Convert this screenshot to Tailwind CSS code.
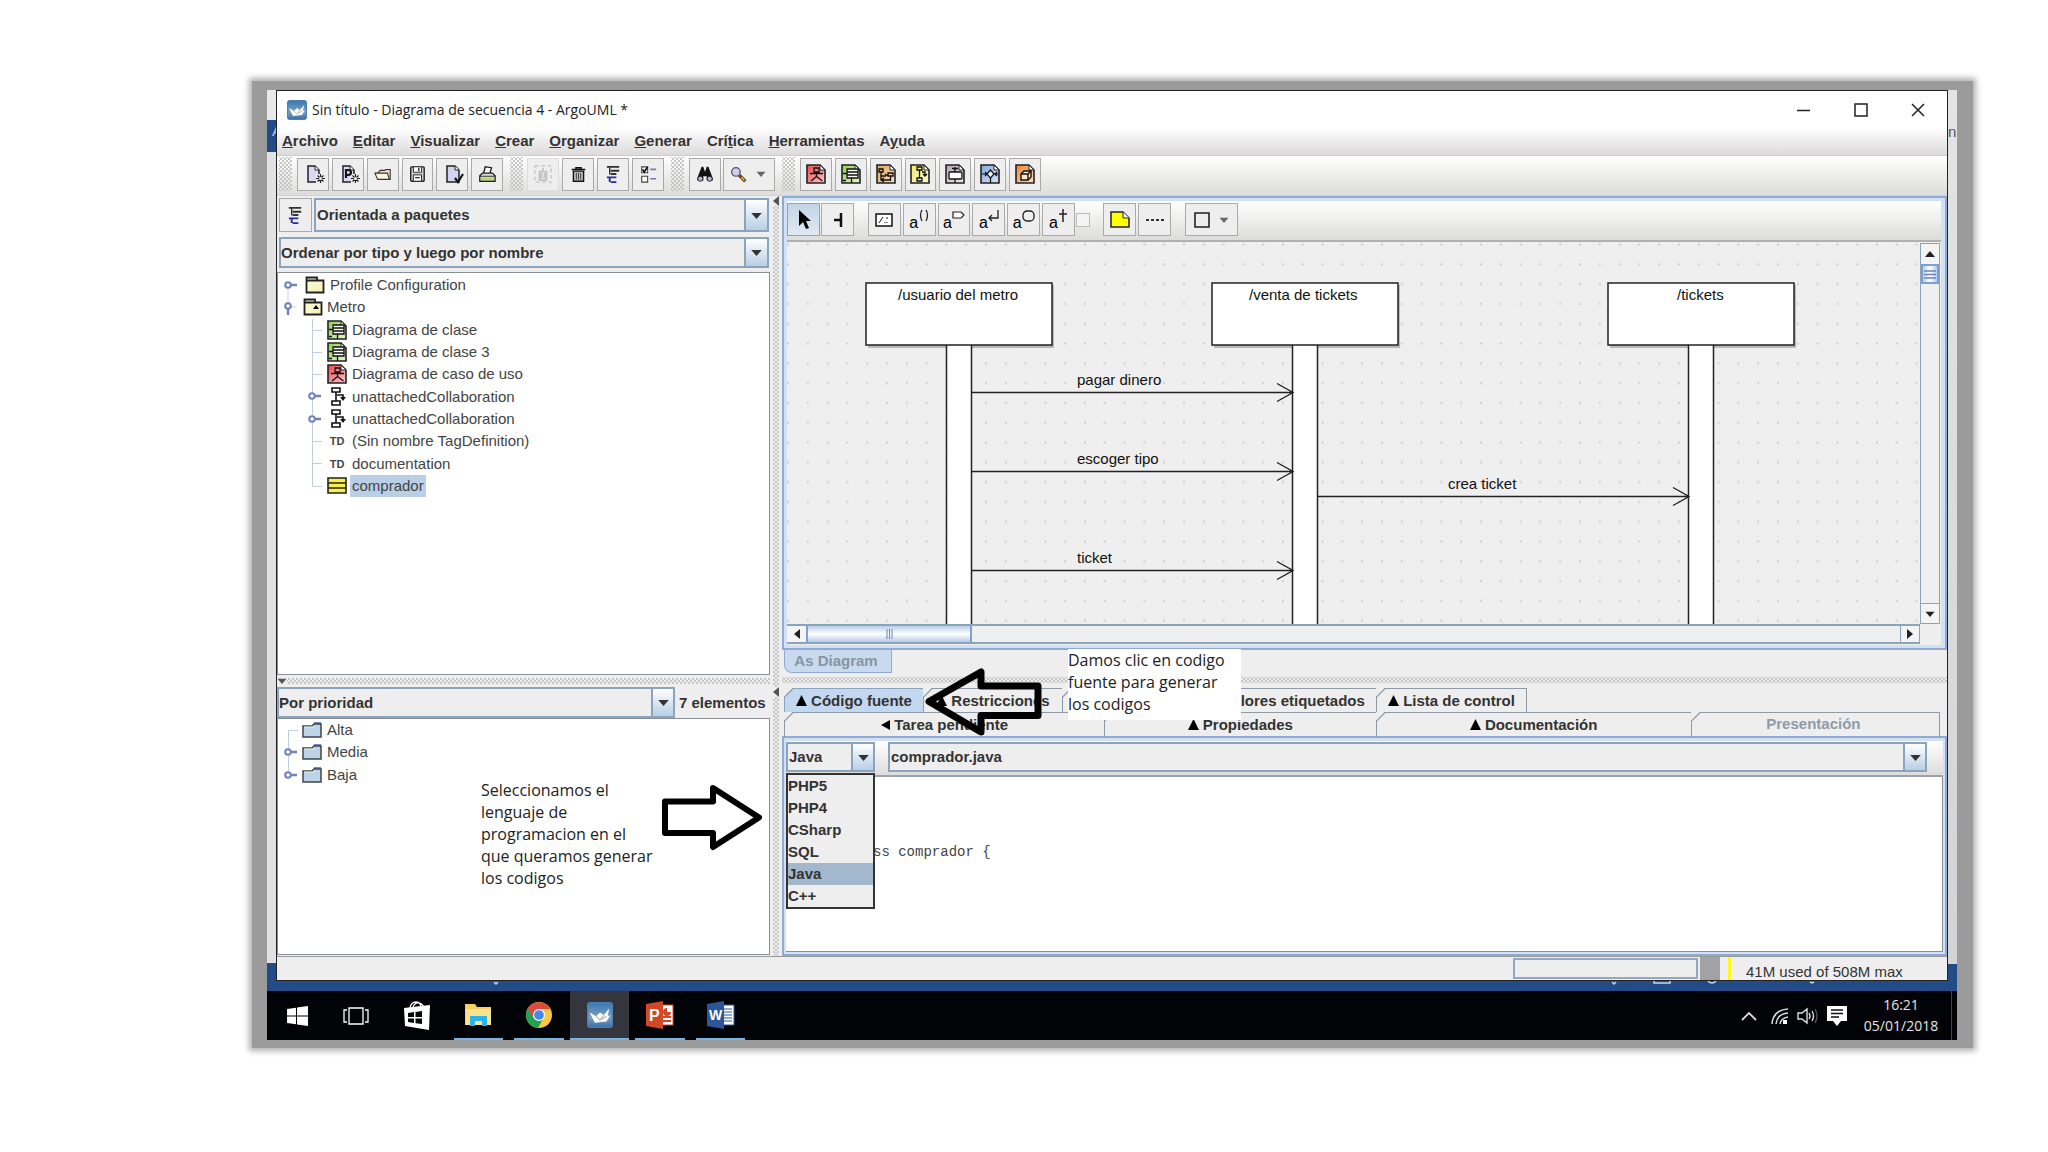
<!DOCTYPE html>
<html lang="es">
<head>
<meta charset="utf-8">
<title>Sin título - Diagrama de secuencia 4 - ArgoUML *</title>
<script src="https://cdn.jsdelivr.net/npm/@tailwindcss/browser@4"></script>
</head>
<body class="bg-white font-['Liberation_Sans',Arial,sans-serif] text-[15px] leading-[22px] text-[#333]">

<!-- Shared icons -->
<svg class="absolute h-0 w-0" xmlns="http://www.w3.org/2000/svg" aria-hidden="true">
  <defs>
    <linearGradient id="argoBg" x1="0" y1="0" x2="0" y2="1"><stop offset="0" stop-color="#3a76b4"/><stop offset=".6" stop-color="#7ba0c0"/><stop offset="1" stop-color="#3a6da8"/></linearGradient>
    <linearGradient id="folderY" x1="0" y1="0" x2="1" y2="1"><stop offset="0" stop-color="#fdfdd8"/><stop offset="1" stop-color="#f4f2b8"/></linearGradient>
    <linearGradient id="redG" x1="0" y1="0" x2="1" y2="1"><stop offset="0" stop-color="#f0464e"/><stop offset="1" stop-color="#fbc9c9"/></linearGradient>
    <linearGradient id="greenG" x1="0" y1="0" x2="1" y2="1"><stop offset="0" stop-color="#8ed04a"/><stop offset="1" stop-color="#e4f5d2"/></linearGradient>
    <linearGradient id="tanG" x1="0" y1="0" x2="1" y2="1"><stop offset="0" stop-color="#dfa45a"/><stop offset="1" stop-color="#f8e4c8"/></linearGradient>
    <linearGradient id="yelG" x1="0" y1="0" x2="1" y2="1"><stop offset="0" stop-color="#efe96a"/><stop offset="1" stop-color="#fdfbd6"/></linearGradient>
    <linearGradient id="greyG" x1="0" y1="0" x2="1" y2="1"><stop offset="0" stop-color="#b3a3ad"/><stop offset="1" stop-color="#f2eef1"/></linearGradient>
    <linearGradient id="blueG" x1="0" y1="0" x2="1" y2="1"><stop offset="0" stop-color="#7fa8dc"/><stop offset="1" stop-color="#d8e6f6"/></linearGradient>
    <linearGradient id="oraG" x1="0" y1="0" x2="1" y2="1"><stop offset="0" stop-color="#f0832a"/><stop offset="1" stop-color="#fde0c2"/></linearGradient>
    <pattern id="dots" width="19.8" height="19.8" patternUnits="userSpaceOnUse"><rect x="0" y="1.5" width="2" height="2" fill="#cfcdcf"/></pattern>
  </defs>
  <symbol id="argo" viewBox="0 0 20 20"><rect x=".5" y=".5" width="19" height="19" rx="2" fill="url(#argoBg)" stroke="#4c7fb2"/><path d="M2 8 7 11l3-3 3 2 4-5-1 6 2-1-3 5-9 1z" fill="#fff"/><path d="M7 11l3 3 3-4M10 14l5-3" stroke="#b9bfc2" fill="none"/></symbol>
  <symbol id="page" viewBox="0 0 20 20"><path d="M1 1h13l5 5v13H1z" stroke="#222" stroke-width="1.6"/><path d="M14 1v5h5z" fill="#fff" stroke="#222"/></symbol>
  <symbol id="usecase" viewBox="0 0 20 20"><use href="#page" fill="url(#redG)"/><g fill="none" stroke="#111" stroke-width="1.3"><path d="M8 4h5v4H8zM10.5 8v5M4 9.500h13M10.500 12.500 5 17M10.500 12.500l6 4.500"/></g></symbol>
  <symbol id="classd" viewBox="0 0 20 20"><use href="#page" fill="url(#greenG)"/><path d="M6 5h11v9H6z" fill="#fff"/><path d="M6 5h11v9H6zM6 8h11M6 11h11M2 9.500h4M10.500 14v5M2 16.500h3" fill="none" stroke="#111" stroke-width="1.3"/></symbol>
  <symbol id="seqd" viewBox="0 0 20 20"><use href="#page" fill="url(#tanG)"/><g fill="none" stroke="#111" stroke-width="1.3"><path d="M3 5h4v3H3zM5 8v8M12 9h5v3h-5zM14.500 12v5M5 12h5M5 16h9M8 14l-3 2 3 2M9 10l3 2"/></g></symbol>
  <symbol id="colld" viewBox="0 0 20 20"><use href="#page" fill="url(#yelG)"/><g fill="none" stroke="#111" stroke-width="1.3"><path d="M7 3h5v3H7zM9.500 6v8M7 14h5v3H7zM12 8h3v4M13 10l2 2 2-2"/></g></symbol>
  <symbol id="stated" viewBox="0 0 20 20"><use href="#page" fill="url(#greyG)"/><g fill="none" stroke="#111" stroke-width="1.3"><rect x="4" y="8" width="13" height="7" rx="1" fill="#fff"/><path d="M10 3v5M7 4.500h6M10 15v4"/></g></symbol>
  <symbol id="actd" viewBox="0 0 20 20"><use href="#page" fill="url(#blueG)"/><path d="M10.500 6l3.500 4-3.500 4L7 10z" fill="#fff" stroke="#111" stroke-width="1.2"/><path d="M2 10h5M14 10h4M10.500 14v5M5 8l2 2-2 2M17 8l-2 2 2 2" fill="none" stroke="#111" stroke-width="1.2"/></symbol>
  <symbol id="depd" viewBox="0 0 20 20"><use href="#page" fill="url(#oraG)"/><g fill="#fbe6cf" stroke="#111" stroke-width="1.4"><path d="M6 10l3-3h7v6l-3 3H6z"/><path d="M6 10h7v6M13 10l3-3" fill="none"/></g></symbol>
  <symbol id="tree" viewBox="0 0 20 20"><g fill="none" stroke-width="2"><path d="M3 2h13M7 6h9M7 9.500h6" stroke="#333"/><path d="M6 2v8" stroke="#333" stroke-width="1.500"/><path d="M3 13h10M7 18h6M6 13v5" stroke="#2b2b9c"/></g></symbol>
  <symbol id="new" viewBox="0 0 20 20"><path d="M3 2h7l4 4v12H3z" fill="#dcd8f4" stroke="#222" stroke-width="1.500"/><path d="M10 2v4h4" fill="#fff" stroke="#222"/><path d="M11 10h9v9h-9z" fill="#eee"/><path d="M15.500 10v9M11 14.500h9M12.500 11.500l6 6M18.500 11.500l-6 6" stroke="#222" stroke-width="1.200"/><circle cx="15.500" cy="14.500" r="1.500" fill="#fff"/></symbol>
  <symbol id="newp" viewBox="0 0 20 20"><use href="#new"/><path d="M6 14V6h2q3 0 3 2.500t-3 2.500H6" fill="none" stroke="#111" stroke-width="2.200"/></symbol>
  <symbol id="open" viewBox="0 0 20 20"><path d="M4 9 7 6h5l1-1h5v11H5z" fill="#f6dcc8" stroke="#333" stroke-width="1.200"/><path d="M1 9h14l2 7H4z" fill="#fbf3e2" stroke="#333" stroke-width="1.200"/></symbol>
  <symbol id="save" viewBox="0 0 20 20"><rect x="3" y="2" width="15" height="16" rx="1" fill="#c9c9cc" stroke="#222" stroke-width="1.500"/><path d="M6 2h9v6H6zM6 11h9v7H6z" fill="#fff" stroke="#222"/><path d="M12 3v4M8 14h5" stroke="#222" stroke-width="1.500"/></symbol>
  <symbol id="props" viewBox="0 0 20 20"><path d="M3 2h8l4 4v12H3z" fill="#d5d3f2" stroke="#222" stroke-width="1.500"/><path d="M11 2v4h4" fill="#fff" stroke="#222"/><path d="M11 14l3 4 5-8" fill="none" stroke="#111" stroke-width="2.200"/></symbol>
  <symbol id="print" viewBox="0 0 20 20"><path d="M6 10 8 2l7 1-2 7z" fill="#fff" stroke="#222" stroke-width="1.500"/><path d="M2 12l3-3h11l3 3v6H2z" fill="#ddd" stroke="#222" stroke-width="1.500"/><path d="M3 14h15v3H3z" fill="#b9d86a"/><path d="M2 12.500h17" stroke="#222"/></symbol>
  <symbol id="ghost" viewBox="0 0 20 20"><rect x="1" y="1" width="18" height="18" fill="none" stroke="#c4c4c4" stroke-width="1.500" stroke-dasharray="4 3"/><path d="M10 3v4M6 7h8v10H6zM8 9v6M12 9v6" fill="#ddd" stroke="#bdbdbd" stroke-width="1.500"/></symbol>
  <symbol id="trash" viewBox="0 0 20 20"><path d="M2 4h16M7 4V2h6v2" fill="none" stroke="#111" stroke-width="1.800"/><path d="M4 6h12v12H4z" fill="#bbb" stroke="#111" stroke-width="1.600"/><path d="M7.500 8v8M10 8v8M12.500 8v8" stroke="#333"/></symbol>
  <symbol id="checks" viewBox="0 0 20 20"><g fill="#fff" stroke="#444" stroke-width="1.300"><path d="M2 1h7v7H2zM2 12h7v7H2z"/></g><path d="M3 4l2 3 4-6" fill="none" stroke="#111" stroke-width="2"/><path d="M12 4h7M12 15h7" stroke="#7a78b8" stroke-width="2"/></symbol>
  <symbol id="bino" viewBox="0 0 20 20"><path d="M6 1h2l2 6 2-6h2l5 13v3h-7v-5H8v5H1v-3z" fill="#111"/><circle cx="4.500" cy="15" r="3" fill="#b4b4de" stroke="#111"/><circle cx="15.500" cy="15" r="3" fill="#b4b4de" stroke="#111"/></symbol>
  <symbol id="lens" viewBox="0 0 20 20"><path d="M11 11l7 7" stroke="#5b3b12" stroke-width="4"/><path d="M13 13l4 4" stroke="#e2a63a" stroke-width="2"/><circle cx="7" cy="7" r="5" fill="#cfcdf0" stroke="#555" stroke-width="1.500"/></symbol>
  <symbol id="down" viewBox="0 0 12 8"><path d="M0 1h12L6 8z"/></symbol>
  <symbol id="tri" viewBox="0 0 12 12"><path d="M6 0l6 12H0z"/></symbol>
  <symbol id="knob" viewBox="0 0 14 10"><path d="M6 5h7" stroke="#6f83b9" stroke-width="2.500"/><circle cx="4" cy="5" r="2.800" fill="#fff" stroke="#6f83b9" stroke-width="2"/></symbol>
  <symbol id="collab" viewBox="0 0 20 20"><g fill="#fff" stroke="#111" stroke-width="1.600"><path d="M5 1h8v4H5zM9 5v9M5 14h8v4H5z"/><path d="M10 8h6v4" fill="none"/><path d="M13 10h6l-3 4z" fill="#111" stroke="none"/></g></symbol>
  <symbol id="folderB" viewBox="0 0 20 16"><path d="M11 3l1-3h7v3z" fill="#7189c0"/><path d="M1 4h9l2-2h7v13H1z" fill="#bcd3e8" stroke="#444" stroke-width="1.500"/><path d="M2 5h9l2-1.500" fill="none" stroke="#e8f2fb"/></symbol>
  <symbol id="corner" viewBox="0 0 10 10"><path d="M-1-1h11l-11 11z" fill="#eee"/><path d="M0 9.500 9.500 0" stroke="#8e9aa6" stroke-width="1.200"/></symbol>
</svg>

<div class="pt-[81px] pl-[252px] pr-[75px] pb-[60px]">
<div class="bg-[#9b9b9b] pt-[9px] pb-2 pl-[15px] pr-4 shadow-[0_0_6px_3px_#b0b0b0]">
<div class="bg-[#234b88]">

  <div class="flex">
    <!-- Left edge of the window behind -->
    <div class="flex w-[9px] flex-col overflow-hidden">
      <div class="h-[30px] bg-[#e9e9e9]"></div>
      <div class="h-8 bg-[#234b88] pl-[5px] text-white/70">A</div>
      <div class="flex-1 bg-[#e2e2e4]"></div>
      <div class="h-[18px]"></div>
    </div>

    <!-- ArgoUML window -->
    <main class="min-w-0 flex-1 border border-[#222] bg-[#eee]">
      <header class="flex h-[37px] items-center bg-white pl-[10px] pr-[22px] text-black">
        <svg class="h-5 w-5"><use href="#argo"/></svg>
        <h1 class="ml-[5px] flex-1 font-['Open_Sans',sans-serif] text-[14px] text-[#222]">Sin título - Diagrama de secuencia 4 - ArgoUML *</h1>
        <div class="flex gap-[43px]">
          <button aria-label="Minimizar"><svg class="h-[14px] w-[14px]"><path d="M0 7.500h13" stroke="#222" stroke-width="1.500"/></svg></button>
          <button aria-label="Maximizar"><svg class="h-[14px] w-[14px]"><rect x="1" y="1" width="12" height="12" fill="none" stroke="#222" stroke-width="1.500"/></svg></button>
          <button aria-label="Cerrar"><svg class="h-[14px] w-[14px]"><path d="M1 1l12 12M13 1 1 13" stroke="#222" stroke-width="1.500"/></svg></button>
        </div>
      </header>

      <nav class="flex h-7 items-center gap-[15px] border-b border-[#ccc] bg-linear-to-b from-white to-[#dcdada] pb-[2px] pl-[5px] font-bold">
        <button><u>A</u>rchivo</button><button><u>E</u>ditar</button><button><u>V</u>isualizar</button><button><u>C</u>rear</button><button><u>O</u>rganizar</button><button><u>G</u>enerar</button><button>Crí<u>t</u>ica</button><button><u>H</u>erramientas</button><button>A<u>y</u>uda</button>
      </nav>

      <div class="flex h-10 items-center border-b border-[#d2d2d2] bg-linear-to-b from-white to-[#dcdcda] pb-[3px] pl-[2px]">
        <div class="mr-[5px] h-[34px] w-[13px] bg-[radial-gradient(#c6c6c6_1px,transparent_1px),radial-gradient(#c6c6c6_1px,transparent_1px)] [background-position:0_0,2px_2px] [background-size:4px_4px]"></div>
        <div class="grid h-[33px] w-[206px] grid-cols-6 gap-[3px]">
          <button aria-label="Nuevo" class="grid place-items-center border border-[#aaa] bg-[#eee] pl-1"><svg class="h-5 w-5"><use href="#new"/></svg></button>
          <button aria-label="Nuevo perfil" class="grid place-items-center border border-[#aaa] bg-[#eee] pl-1"><svg class="h-5 w-5"><use href="#newp"/></svg></button>
          <button aria-label="Abrir" class="grid place-items-center border border-[#aaa] bg-[#eee]"><svg class="h-[18px] w-[18px]"><use href="#open"/></svg></button>
          <button aria-label="Guardar" class="grid place-items-center border border-[#aaa] bg-[#eee]"><svg class="h-[18px] w-[18px]"><use href="#save"/></svg></button>
          <button aria-label="Propiedades" class="grid place-items-center border border-[#aaa] bg-[#eee] pl-1"><svg class="h-5 w-5"><use href="#props"/></svg></button>
          <button aria-label="Imprimir" class="grid place-items-center border border-[#aaa] bg-[#eee]"><svg class="h-[18px] w-[18px]"><use href="#print"/></svg></button>
        </div>
        <div class="mr-1 ml-[7px] h-[34px] w-[13px] bg-[radial-gradient(#c6c6c6_1px,transparent_1px),radial-gradient(#c6c6c6_1px,transparent_1px)] [background-position:0_0,2px_2px] [background-size:4px_4px]"></div>
        <div class="grid h-[33px] w-[137px] grid-cols-4 gap-[3px]">
          <button disabled aria-label="Quitar" class="grid place-items-center border border-[#ddd] bg-[#eee]"><svg class="h-[18px] w-[18px]"><use href="#ghost"/></svg></button>
          <button aria-label="Eliminar" class="grid place-items-center border border-[#aaa] bg-[#eee]"><svg class="h-[17px] w-[17px]"><use href="#trash"/></svg></button>
          <button aria-label="Perspectivas" class="grid place-items-center border border-[#aaa] bg-[#eee]"><svg class="h-[19px] w-[19px]"><use href="#tree"/></svg></button>
          <button aria-label="Opciones" class="grid place-items-center border border-[#aaa] bg-[#eee]"><svg class="h-[17px] w-[17px]"><use href="#checks"/></svg></button>
        </div>
        <div class="mr-[5px] ml-[7px] h-[34px] w-[13px] bg-[radial-gradient(#c6c6c6_1px,transparent_1px),radial-gradient(#c6c6c6_1px,transparent_1px)] [background-position:0_0,2px_2px] [background-size:4px_4px]"></div>
        <div class="flex h-[33px] gap-[2px]">
          <button aria-label="Buscar" class="grid w-8 place-items-center border border-[#aaa] bg-[#eee]"><svg class="h-[17px] w-[18px]"><use href="#bino"/></svg></button>
          <button aria-label="Zoom" class="flex w-[52px] items-center justify-between border border-[#aaa] bg-[#eee] pr-[8px] pl-[6px]"><svg class="h-[17px] w-[17px]"><use href="#lens"/></svg><svg class="h-[6px] w-[10px] fill-[#666]"><use href="#down"/></svg></button>
        </div>
        <div class="mr-[5px] ml-[7px] h-[34px] w-[13px] bg-[radial-gradient(#c6c6c6_1px,transparent_1px),radial-gradient(#c6c6c6_1px,transparent_1px)] [background-position:0_0,2px_2px] [background-size:4px_4px]"></div>
        <div class="grid h-[33px] w-[241px] grid-cols-7 gap-[3px]">
          <button aria-label="Diagrama de caso de uso" class="grid place-items-center border border-[#aaa] bg-[#eee]"><svg class="h-5 w-5"><use href="#usecase"/></svg></button>
          <button aria-label="Diagrama de clase" class="grid place-items-center border border-[#aaa] bg-[#eee]"><svg class="h-5 w-5"><use href="#classd"/></svg></button>
          <button aria-label="Diagrama de secuencia" class="grid place-items-center border border-[#aaa] bg-[#eee]"><svg class="h-5 w-5"><use href="#seqd"/></svg></button>
          <button aria-label="Diagrama de colaboración" class="grid place-items-center border border-[#aaa] bg-[#eee]"><svg class="h-5 w-5"><use href="#colld"/></svg></button>
          <button aria-label="Diagrama de estados" class="grid place-items-center border border-[#aaa] bg-[#eee]"><svg class="h-5 w-5"><use href="#stated"/></svg></button>
          <button aria-label="Diagrama de actividades" class="grid place-items-center border border-[#aaa] bg-[#eee]"><svg class="h-5 w-5"><use href="#actd"/></svg></button>
          <button aria-label="Diagrama de despliegue" class="grid place-items-center border border-[#aaa] bg-[#eee]"><svg class="h-5 w-5"><use href="#depd"/></svg></button>
        </div>
      </div>

      <div class="flex">
        <!-- Explorer and to-do column -->
        <section class="flex w-[493px] shrink-0 flex-col pt-[2px]">
          <div class="flex h-[34px] gap-[2px] px-[2px] pr-[1px]">
            <button aria-label="Configurar perspectivas" class="grid w-[33px] place-items-center border border-[#aaa] bg-[#eee]"><svg class="h-[19px] w-[19px]"><use href="#tree"/></svg></button>
            <div class="relative flex-1 border-2 border-[#8ba4bd]">
              <select aria-label="Perspectiva" class="h-full w-full appearance-none bg-[#eee] pl-[1px] font-bold"><option>Orientada a paquetes</option></select>
              <span class="pointer-events-none absolute inset-y-0 right-0 grid w-[23px] place-items-center border-l-2 border-[#8ba4bd] bg-linear-to-b from-white to-[#b8cfe5]"><svg class="h-[7px] w-[13px] fill-[#333]"><use href="#down"/></svg></span>
            </div>
          </div>
          <div class="mt-[5px] h-[31px] pr-[1px] pl-[2px]">
            <div class="relative h-full border-2 border-[#8ba4bd]">
              <select aria-label="Orden" class="h-full w-full appearance-none bg-[#eee] font-bold"><option>Ordenar por tipo y luego por nombre</option></select>
              <span class="pointer-events-none absolute inset-y-0 right-0 grid w-[23px] place-items-center border-l-2 border-[#8ba4bd] bg-linear-to-b from-white to-[#b8cfe5]"><svg class="h-[7px] w-[13px] fill-[#333]"><use href="#down"/></svg></span>
            </div>
          </div>

          <div class="mt-1 h-[403px] border border-[#8a8f96] bg-white pt-[1px] text-[#444]">
            <ul class="grid h-[223px] grid-rows-10">
              <li class="flex items-center pl-[6px]"><svg class="h-full w-[14px] shrink-0"><path d="M4 11v14" stroke="#c5d3e3"/><use href="#knob" y="6" width="14" height="10"/></svg><svg class="ml-[7px] h-[18px] w-5"><path d="M1.500 5V1.500H12V5M1.500 4.500h17v12h-17z" fill="url(#folderY)" stroke="#222" stroke-width="1.800"/></svg><span class="ml-[5px]">Profile Configuration</span></li>
              <li class="flex items-center pl-[6px]"><svg class="h-full w-[14px] shrink-0"><path d="M4 0v8M4 11h9" stroke="#c5d3e3"/><path d="M4 11v8" stroke="#6f83b9" stroke-width="2.500"/><circle cx="4" cy="10" r="2.800" fill="#fff" stroke="#6f83b9" stroke-width="2"/></svg><svg class="ml-[5px] h-[18px] w-5"><path d="M1.500 5V1.500H12V5M1.500 4.500h17v12h-17z" fill="url(#folderY)" stroke="#222" stroke-width="1.800"/><path d="M13 7l3 4h-6z"/></svg><span class="ml-[4px]">Metro</span></li>
              <li class="flex items-center pl-[30px]"><svg class="h-full w-[14px] shrink-0"><path d="M4.500 0v23M4 11.500h10" stroke="#c0cfdf"/></svg><svg class="ml-[5px] h-5 w-5"><use href="#classd"/></svg><span class="ml-[5px]">Diagrama de clase</span></li>
              <li class="flex items-center pl-[30px]"><svg class="h-full w-[14px] shrink-0"><path d="M4.500 0v23M4 11.500h10" stroke="#c0cfdf"/></svg><svg class="ml-[5px] h-5 w-5"><use href="#classd"/></svg><span class="ml-[5px]">Diagrama de clase 3</span></li>
              <li class="flex items-center pl-[30px]"><svg class="h-full w-[14px] shrink-0"><path d="M4.500 0v23M4 11.500h10" stroke="#c0cfdf"/></svg><svg class="ml-[5px] h-5 w-5"><use href="#usecase"/></svg><span class="ml-[5px]">Diagrama de caso de uso</span></li>
              <li class="flex items-center pl-[30px]"><svg class="h-full w-[14px] shrink-0"><path d="M4.500 0v23" stroke="#c0cfdf"/><use href="#knob" y="6" width="14" height="10"/></svg><svg class="ml-[5px] h-5 w-5"><use href="#collab"/></svg><span class="ml-[5px]">unattachedCollaboration</span></li>
              <li class="flex items-center pl-[30px]"><svg class="h-full w-[14px] shrink-0"><path d="M4.500 0v23" stroke="#c0cfdf"/><use href="#knob" y="6" width="14" height="10"/></svg><svg class="ml-[5px] h-5 w-5"><use href="#collab"/></svg><span class="ml-[5px]">unattachedCollaboration</span></li>
              <li class="flex items-center pl-[30px]"><svg class="h-full w-[14px] shrink-0"><path d="M4.500 0v23M4 11.500h10" stroke="#c0cfdf"/></svg><b class="ml-[5px] w-5 text-center text-[11px]">TD</b><span class="ml-[5px]">(Sin nombre TagDefinition)</span></li>
              <li class="flex items-center pl-[30px]"><svg class="h-full w-[14px] shrink-0"><path d="M4.500 0v23M4 11.500h10" stroke="#c0cfdf"/></svg><b class="ml-[5px] w-5 text-center text-[11px]">TD</b><span class="ml-[5px]">documentation</span></li>
              <li class="flex items-center pl-[30px]"><svg class="h-full w-[14px] shrink-0"><path d="M4.500 0v11.500h10" fill="none" stroke="#c0cfdf"/></svg><svg class="ml-[5px] h-[18px] w-5"><path d="M1 1h18v15H1zM1 6h18M1 11h18" fill="#f7f04a" stroke="#222" stroke-width="1.600"/></svg><span class="ml-[3px] bg-[#b8cfe5] px-[2px]">comprador</span></li>
            </ul>
          </div>

          <div class="flex h-3 items-start bg-[radial-gradient(#c6c6c6_1px,transparent_1px),radial-gradient(#c6c6c6_1px,transparent_1px)] bg-clip-content py-[3px] [background-position:0_0,2px_2px] [background-size:4px_4px]"><svg class="h-[6px] w-[10px] bg-[#eee] fill-[#555]"><use href="#down"/></svg></div>

          <div class="flex h-[31px] items-center">
            <div class="relative h-full flex-1 border-2 border-[#8ba4bd]">
              <select aria-label="Agrupar tareas" class="h-full w-full appearance-none bg-[#eee] font-bold"><option>Por prioridad</option></select>
              <span class="pointer-events-none absolute inset-y-0 right-0 grid w-[22px] place-items-center border-l-2 border-[#8ba4bd] bg-linear-to-b from-white to-[#b8cfe5]"><svg class="h-[7px] w-[13px] fill-[#333]"><use href="#down"/></svg></span>
            </div>
            <span class="w-[95px] pl-[4px] font-bold whitespace-nowrap">7 elementos</span>
          </div>

          <div class="relative h-[237px] border border-[#8a8f96] bg-white text-[#444]">
            <ul class="grid h-[67px] grid-rows-3">
              <li class="flex items-center pl-[6px]"><svg class="h-full w-[14px] shrink-0"><path d="M4.500 23V11.500h10" fill="none" stroke="#c0cfdf"/></svg><svg class="ml-[4px] h-4 w-5"><use href="#folderB"/></svg><span class="ml-[5px]">Alta</span></li>
              <li class="flex items-center pl-[6px]"><svg class="h-full w-[14px] shrink-0"><path d="M4.500 0v23" stroke="#c0cfdf"/><use href="#knob" y="6" width="14" height="10"/></svg><svg class="ml-[4px] h-4 w-5"><use href="#folderB"/></svg><span class="ml-[5px]">Media</span></li>
              <li class="flex items-center pl-[6px]"><svg class="h-full w-[14px] shrink-0"><path d="M4.500 0v11" stroke="#c0cfdf"/><use href="#knob" y="6" width="14" height="10"/></svg><svg class="ml-[4px] h-4 w-5"><use href="#folderB"/></svg><span class="ml-[5px]">Baja</span></li>
            </ul>
            <p class="absolute top-[60px] left-[203px] font-['Open_Sans',sans-serif] text-[16px] leading-[22px] whitespace-nowrap text-[#222]">Seleccionamos el<br>lenguaje de<br>programacion en el<br>que queramos generar<br>los codigos</p>
            <svg class="absolute top-[65px] left-[384px] h-[68px] w-[102px]"><path d="M3 17.500h48V4L97 33.500 51 63V49H3z" fill="#fff" stroke="#000" stroke-width="6" stroke-linejoin="round"/></svg>
          </div>
        </section>

        <!-- Vertical splitter -->
        <div class="w-3 shrink-0 bg-[radial-gradient(#c6c6c6_1px,transparent_1px),radial-gradient(#c6c6c6_1px,transparent_1px)] bg-clip-content px-[3px] [background-position:0_0,2px_2px] [background-size:4px_4px]">
          <svg class="h-[10px] w-[6px] bg-[#eee]"><path d="M6 0v10L0 5z" fill="#555"/></svg>
          <svg class="mt-[481px] h-[10px] w-[6px] bg-[#eee]"><path d="M6 0v10L0 5z" fill="#555"/></svg>
        </div>

        <!-- Diagram and details column -->
        <section class="relative min-w-0 flex-1">
          <div class="border-2 border-[#8fabd3] bg-[#d3e0f2] p-[3px] pr-1">
            <div class="flex h-[41px] items-center border-b-2 border-[#b0b0b0] bg-linear-to-b from-white to-[#dcdcda] pb-[2px]">
              <button aria-label="Seleccionar" class="grid h-[33px] w-[33px] place-items-center border border-[#8fa3b8] bg-linear-to-b from-[#c3d5e6] to-[#dfe9f3]"><svg class="h-5 w-[14px]"><path d="M2 0v16l4-4 3 7 3-1-3-7h5z"/></svg></button>
              <button aria-label="Modo escoba" class="ml-[1px] grid h-[33px] w-[33px] place-items-center border border-[#aaa] bg-[#eee]"><svg class="h-4 w-[12px]"><path d="M9 1v14M2 8h7" stroke="#111" stroke-width="2.500"/></svg></button>
              <div class="ml-[14px] grid h-[33px] w-[207px] grid-cols-6 gap-[2px]">
                <button aria-label="Rol de clasificador" class="grid place-items-center border border-[#aaa] bg-[#eee]"><svg class="h-[14px] w-[18px]"><path d="M1 1h16v12H1z" fill="#fff" stroke="#111" stroke-width="1.500"/><path d="M4 10l4-6M10 9v1M12 4v2M12 9v1" stroke="#111"/></svg></button>
                <button aria-label="Mensaje con llamada" class="grid place-items-center border border-[#aaa] bg-[#eee] text-black"><span class="flex items-center text-[16px] leading-none"><span class="mt-[6px]">a</span><svg class="mb-[8px] h-[14px] w-[11px]"><path d="M4 1q-3 5 0 11M8 1q3 5 0 11" fill="none" stroke="#222" stroke-width="1.300"/></svg></span></button>
                <button aria-label="Mensaje de envío" class="grid place-items-center border border-[#aaa] bg-[#eee] text-black"><span class="flex items-center text-[16px] leading-none"><span class="mt-[6px]">a</span><svg class="mb-[10px] h-2 w-[13px]"><path d="M1 1h8l3 3-3 3H1z" fill="#fff" stroke="#222" stroke-width="1.200"/></svg></span></button>
                <button aria-label="Mensaje de retorno" class="grid place-items-center border border-[#aaa] bg-[#eee] text-black"><span class="flex items-center text-[16px] leading-none"><span class="mt-[6px]">a</span><svg class="mb-[8px] h-3 w-[11px]"><path d="M10 0v8H1M4 5 1 8l3 3" fill="none" stroke="#222" stroke-width="1.300"/></svg></span></button>
                <button aria-label="Mensaje de creación" class="grid place-items-center border border-[#aaa] bg-[#eee] text-black"><span class="flex items-center text-[16px] leading-none"><span class="mt-[6px]">a</span><svg class="mb-[8px] h-3 w-[13px]"><rect x="1" y="1" width="11" height="10" rx="4" fill="none" stroke="#222" stroke-width="1.300"/></svg></span></button>
                <button aria-label="Mensaje de destrucción" class="grid place-items-center border border-[#aaa] bg-[#eee] text-black"><span class="flex items-center text-[16px] leading-none"><span class="mt-[6px]">a</span><svg class="mb-[8px] h-[13px] w-[10px]"><path d="M5 0v13M1 5h8" stroke="#222" stroke-width="1.500"/></svg></span></button>
              </div>
              <input type="checkbox" aria-label="Fijar herramienta" class="ml-[1px] h-[14px] w-[14px] appearance-none border border-[#bbb] bg-[#f4f4f4]">
              <button aria-label="Comentario" class="ml-[13px] grid h-[33px] w-[33px] place-items-center border border-[#aaa] bg-[#eee]"><svg class="h-[17px] w-5"><path d="M1 1h12l6 6v9H1z" fill="#ff0" stroke="#222" stroke-width="1.500"/><path d="M13 1v6h6" fill="#fff" stroke="#222"/></svg></button>
              <button aria-label="Enlace de comentario" class="ml-[2px] grid h-[33px] w-[33px] place-items-center border border-[#aaa] bg-[#eee]"><svg class="h-1 w-[18px]"><path d="M0 2h18" stroke="#333" stroke-width="2" stroke-dasharray="3 2"/></svg></button>
              <button aria-label="Formas" class="ml-[14px] flex h-[33px] w-[53px] items-center justify-between border border-[#aaa] bg-[#eee] px-2"><svg class="h-4 w-4"><path d="M1 1h14v14H1z" fill="none" stroke="#222" stroke-width="1.600"/></svg><svg class="h-[6px] w-[10px] fill-[#666]"><use href="#down"/></svg></button>
            </div>

            <div class="flex bg-[#f0eff0]">
              <svg class="h-[382px] min-w-0 flex-1 text-[15px]" role="img" aria-label="Diagrama de secuencia">
                <rect width="100%" height="100%" fill="url(#dots)"/>
                <g fill="#555" opacity=".35"><rect x="81" y="43" width="186" height="63"/><rect x="427" y="43" width="186" height="63"/><rect x="823" y="43" width="186" height="63"/></g>
                <g fill="#fff" stroke="#222" stroke-width="1.500">
                  <path d="M159.500 100v300h25V100M505.500 100v300h25V100M901.500 100v300h25V100"/>
                  <rect x="79" y="41" width="186" height="62"/><rect x="425" y="41" width="186" height="62"/><rect x="821" y="41" width="186" height="62"/>
                </g>
                <g fill="none" stroke="#222" stroke-width="1.400">
                  <path d="M185 150.500h321M490 141.500l16 9-16 9M185 229.500h321M490 220.500l16 9-16 9M185 328.500h321M490 319.500l16 9-16 9M531 254.500h371M886 245.500l16 9-16 9"/>
                </g>
                <g fill="#111">
                  <text x="111" y="58">/usuario del metro</text><text x="462" y="58">/venta de tickets</text><text x="890" y="58">/tickets</text>
                  <text x="290" y="143">pagar dinero</text><text x="290" y="222">escoger tipo</text><text x="290" y="321">ticket</text><text x="661" y="247">crea ticket</text>
                </g>
              </svg>
              <div class="mt-[1px] mr-[1px] flex w-5 flex-col border border-[#8ba4bd] bg-[#eeefef]">
                <button aria-label="Arriba" class="grid h-5 place-items-center bg-[#f4f4f4]"><svg class="h-[6px] w-[10px]"><path d="M5 0l5 6H0z" fill="#222"/></svg></button>
                <div class="grid h-5 place-items-center border-2 border-[#7f9fd0] bg-linear-to-r from-[#b8cfe5] via-white to-[#b4cbea]"><svg class="h-[9px] w-3"><path d="M0 1h12M0 4.500h12M0 8h12" stroke="#6f83b9" stroke-width="1.300"/></svg></div>
                <div class="flex-1"></div>
                <button aria-label="Abajo" class="grid h-5 place-items-center border-t border-[#8ba4bd] bg-[#f4f4f4]"><svg class="h-[6px] w-[10px] fill-[#222]"><use href="#down"/></svg></button>
              </div>
            </div>
            <div class="bg-[#eee] pr-[21px] pb-[1px]">
              <div class="flex h-5 border-y-2 border-[#8ba4bd] border-r bg-[#eeefef]">
                <button aria-label="Izquierda" class="grid w-[19px] place-items-center bg-[#f4f4f4]"><svg class="h-[10px] w-[6px]"><path d="M6 0v10L0 5z" fill="#222"/></svg></button>
                <div class="grid w-[166px] place-items-center border-x-2 border-[#7f9fd0] bg-linear-to-b from-[#b8cfe5] via-white to-[#b4cbea]"><svg class="h-[10px] w-[7px]"><path d="M1 0v10M3.500 0v10M6 0v10" stroke="#6f83b9"/></svg></div>
                <div class="flex-1"></div>
                <button aria-label="Derecha" class="grid w-[19px] place-items-center border-l border-[#8ba4bd] bg-[#f4f4f4]"><svg class="h-[10px] w-[6px]"><path d="M0 0v10l6-5z" fill="#222"/></svg></button>
              </div>
            </div>
          </div>

          <button disabled class="ml-[2px] block h-[23px] w-[108px] rounded-bl-lg border border-t-0 border-[#8fabd3] bg-[#c9daee] pr-1 text-center font-bold text-[#8795a4]">As Diagram</button>
          <div class="mt-[4px] h-[6px] bg-[radial-gradient(#c6c6c6_1px,transparent_1px),radial-gradient(#c6c6c6_1px,transparent_1px)] [background-position:0_0,2px_2px] [background-size:4px_4px]"></div>

          <div class="mt-[5px] pr-[7px] pl-[2px] font-bold">
            <div class="flex h-6">
              <button class="relative flex w-[140px] items-center justify-center gap-1 border border-b-0 border-[#8ba4bd] bg-[#c3d7f0]"><svg class="absolute -top-px -left-px h-[10px] w-[10px]"><use href="#corner"/></svg><svg class="h-[11px] w-[11px]"><use href="#tri"/></svg>Código fuente</button>
              <button class="relative flex w-[139px] items-center justify-center gap-1 border border-b-0 border-l-0 border-[#8e9aa6]"><svg class="absolute -top-px -left-px h-[10px] w-[10px]"><use href="#corner"/></svg><svg class="h-[11px] w-[11px]"><use href="#tri"/></svg>Restricciones</button>
              <button class="relative flex w-[134px] items-center justify-center gap-1 border border-b-0 border-l-0 border-[#8e9aa6]"><svg class="absolute -top-px -left-px h-[10px] w-[10px]"><use href="#corner"/></svg><svg class="h-[11px] w-[11px]"><use href="#tri"/></svg>Estereotipo</button>
              <button class="relative flex w-[180px] items-center justify-center gap-1 border border-b-0 border-l-0 border-[#8e9aa6] whitespace-nowrap"><svg class="absolute -top-px -left-px h-[10px] w-[10px]"><use href="#corner"/></svg><svg class="h-[11px] w-[11px]"><use href="#tri"/></svg>Valores etiquetados</button>
              <button class="relative flex w-[150px] items-center justify-center gap-1 border border-b-0 border-l-0 border-[#8e9aa6]"><svg class="absolute -top-px -left-px h-[10px] w-[10px]"><use href="#corner"/></svg><svg class="h-[11px] w-[11px]"><use href="#tri"/></svg>Lista de control</button>
            </div>
            <div class="grid h-6 grid-cols-[321fr_271fr_315fr_248fr]">
              <button class="relative flex items-center justify-center gap-1 border border-b-0 border-[#8e9aa6] pb-[2px]"><svg class="absolute -top-px -left-px h-[10px] w-[10px]"><use href="#corner"/></svg><svg class="h-[10px] w-[9px]"><path d="M9 0v10L0 5z" fill="#000"/></svg>Tarea pendiente</button>
              <button class="relative flex items-center justify-center gap-1 border border-b-0 border-l-0 border-[#8e9aa6] pb-[2px]"><svg class="absolute -top-px -left-px h-[10px] w-[10px]"><use href="#corner"/></svg><svg class="h-[11px] w-[11px]"><use href="#tri"/></svg>Propiedades</button>
              <button class="relative flex items-center justify-center gap-1 border border-b-0 border-l-0 border-[#8e9aa6] pb-[2px]"><svg class="absolute -top-px -left-px h-[10px] w-[10px]"><use href="#corner"/></svg><svg class="h-[11px] w-[11px]"><use href="#tri"/></svg>Documentación</button>
              <button disabled class="relative flex items-center justify-center border border-b-0 border-l-0 border-[#8e9aa6] pr-1 pb-[3px] text-[#8f9aa7]"><svg class="absolute -top-px -left-px h-[10px] w-[10px]"><use href="#corner"/></svg>Presentación</button>
            </div>
          </div>

          <div class="border-2 border-[#8fabd3] bg-[#d3e0f2] p-[2px] pt-[3px]">
            <div class="flex h-9 gap-[13px] border-b-2 border-[#9aa2aa] bg-linear-to-b from-white to-[#dcdcdc] pt-[1px] pr-4 pb-[3px]">
              <div class="relative w-[89px] border-2 border-[#8ba4bd]">
                <select aria-label="Lenguaje" class="h-full w-full appearance-none bg-[#eee] pl-[1px] font-bold"><option>Java</option></select>
                <span class="pointer-events-none absolute inset-y-0 right-0 grid w-[22px] place-items-center border-l-2 border-[#8ba4bd] bg-linear-to-b from-white to-[#b8cfe5]"><svg class="h-[7px] w-[13px] fill-[#333]"><use href="#down"/></svg></span>
                <ul role="listbox" aria-label="Lenguajes" class="absolute top-[29px] -left-[2px] z-10 grid h-[136px] w-[89px] grid-rows-6 border-2 border-[#333] bg-[#eee] font-bold">
                  <li role="option" aria-selected="false">PHP5</li><li role="option" aria-selected="false">PHP4</li><li role="option" aria-selected="false">CSharp</li><li role="option" aria-selected="false">SQL</li><li role="option" aria-selected="true" class="bg-[#a3b8cc]">Java</li><li role="option" aria-selected="false">C++</li>
                </ul>
              </div>
              <div class="relative flex-1 border-2 border-[#8ba4bd]">
                <select aria-label="Archivo" class="h-full w-full appearance-none bg-[#eee] pl-[1px] font-bold"><option>comprador.java</option></select>
                <span class="pointer-events-none absolute inset-y-0 right-0 grid w-[22px] place-items-center border-l-2 border-[#8ba4bd] bg-linear-to-b from-white to-[#b8cfe5]"><svg class="h-[7px] w-[13px] fill-[#333]"><use href="#down"/></svg></span>
              </div>
            </div>
            <pre class="h-[175px] border-r border-b border-[#8a8f96] bg-white pt-16 pl-[3px] font-['Liberation_Mono',monospace] text-[14px] text-[#444]">public class comprador {</pre>
          </div>

          <!-- Callout over the tabs -->
          <svg class="absolute top-[471px] left-[142px] h-[70px] w-[120px]"><path d="M5 34.500 57 5v14h57v29.500H57V65z" fill="none" stroke="#000" stroke-width="7" stroke-linejoin="round"/></svg>
          <p class="absolute top-[453px] left-[286px] h-[71px] w-[173px] bg-white font-['Open_Sans',sans-serif] text-[16px] leading-[22px] whitespace-nowrap text-[#222]">Damos clic en codigo<br>fuente para generar<br>los codigos</p>
        </section>
      </div>

      <footer class="flex h-6 border-t border-[#999]">
        <div class="flex-1"></div>
        <div class="my-[1px] w-[185px] border-2 border-[#94a6c0]"></div>
        <div class="ml-[2px] w-[20px] bg-[#a2a1a3]"></div>
        <div class="ml-2 w-[3px] bg-[#fff61e]"></div>
        <p class="w-[216px] pt-[5px] pl-[15px] leading-[20px]">41M used of 508M max</p>
      </footer>
    </main>

    <!-- Right edge of the window behind -->
    <div class="flex w-[9px] flex-col overflow-hidden text-[#555]">
      <div class="h-[874px] bg-linear-to-b from-[#e4e4e4] to-[#d4d4d6] pt-[31px]">n</div>
    </div>
  </div>
  <svg class="block h-[10px] w-full"><g fill="none" stroke="#c9d6ea" stroke-width="1.500"><path d="M227 1l2 2 2-2M1345 1l2 2 2-2M1387 0v2h16V0M1441 0q4 4 8 0M1543 1l2 1 2-1"/></g></svg>

  <!-- Windows taskbar -->
  <div class="flex h-[49px] items-stretch bg-[#020306] text-white">
    <button aria-label="Inicio" class="grid w-[60px] place-items-center"><svg class="h-5 w-[21px]"><path d="M0 3l9-1.300V9.500H0zM10 1.500 21 0v9.500H10zM0 10.500h9v7.800L0 17zM10 10.500h11V20l-11-1.500z" fill="#fff"/></svg></button>
    <button aria-label="Vista de tareas" class="grid w-[58px] place-items-center"><svg class="h-[18px] w-[26px]"><path d="M6 1h14v16H6zM4 3H1v12h3M22 3h3v12h-3" fill="none" stroke="#fff" stroke-width="1.300"/></svg></button>
    <button aria-label="Tienda" class="grid w-[64px] place-items-center"><svg class="h-[30px] w-[27px]"><path d="M6 7Q7 1 12 1t5 6M9 6q2-5 6-4t5 5" fill="none" stroke="#fff" stroke-width="1.300"/><path d="M0 7l26-3-1 25L1 25z" fill="#fff"/><path d="M4 12l6-1v5H4zM11.500 11 18 10v6h-6.500zM4 17.500h6V22l-6-1zM11.500 17.500H18V23l-6.500-.8z" fill="#05060a"/></svg></button>
    <button aria-label="Explorador" class="ml-[5px] grid w-[49px] place-items-center border-b-2 border-[#76b4e4]"><svg class="h-6 w-[27px]"><path d="M0 1h10l2 3h14v18H0z" fill="#f5cf63"/><path d="M1 6h25v16H1z" fill="#fbe28c"/><path d="M5 23V13h17v10h-5v-5h-7v5z" fill="#2ab2ea"/></svg></button>
    <button aria-label="Chrome" class="ml-[11px] grid w-[50px] place-items-center border-b-2 border-[#76b4e4]"><svg class="h-7 w-7"><circle cx="14" cy="14" r="13" fill="#fcca3e"/><path d="M14 14 2.700 7.500A13 13 0 0 0 13 27l5-9z" fill="#23a155"/><path d="M2.700 7.500A13 13 0 0 1 25.300 8H14l-6 8z" fill="#de4b3c"/><circle cx="14" cy="14" r="6" fill="#fff"/><circle cx="14" cy="14" r="4.800" fill="#4786ee"/></svg></button>
    <button aria-label="ArgoUML" class="ml-[6px] grid w-[59px] place-items-center border-b-2 border-[#76b4e4] bg-[#35363d]"><svg class="h-[26px] w-[26px]"><use href="#argo"/></svg></button>
    <button aria-label="PowerPoint" class="ml-[6px] grid w-[50px] place-items-center border-b-2 border-[#76b4e4]"><svg class="h-7 w-7"><path d="M14 4h13v20H14z" fill="#fff" stroke="#d24726"/><path d="M17 16h8M17 20h8" stroke="#d24726" stroke-width="2"/><path d="M21 7v4h4a4 4 0 1 1-4-4z" fill="#d24726"/><path d="M0 3 17 0v28L0 25z" fill="#d24726"/><text x="3" y="20" font-size="16" font-weight="bold" fill="#fff">P</text></svg></button>
    <button aria-label="Word" class="ml-[11px] grid w-[49px] place-items-center border-b-2 border-[#76b4e4]"><svg class="h-7 w-7"><path d="M14 4h13v20H14z" fill="#fff" stroke="#2b579a"/><path d="M17 8h8M17 11h8M17 14h8M17 17h8M17 20h8" stroke="#2b579a"/><path d="M0 3 17 0v28L0 25z" fill="#2b579a"/><text x="2" y="19" font-size="14" font-weight="bold" fill="#fff">W</text></svg></button>
    <div class="flex-1"></div>
    <div class="flex items-center">
      <svg class="h-[10px] w-4"><path d="M1 9l7-7 7 7" fill="none" stroke="#ddd" stroke-width="1.800"/></svg>
      <svg class="ml-[14px] h-[18px] w-[18px]"><g fill="none" stroke="#ddd" stroke-width="1.500"><path d="M1 17Q2 3 17 2M5 17q1-10 12-11M9 17q1-6 8-7"/></g><path d="M12 13h4v4h-4z" fill="#fff"/></svg>
      <svg class="ml-2 h-[18px] w-[22px]"><path d="M1 6h4l5-4v14l-5-4H1z" fill="none" stroke="#ddd" stroke-width="1.400"/><path d="M12 6q2 3 0 6M15 4q3 5 0 10" fill="none" stroke="#ddd" stroke-width="1.400"/><path d="M18 2q4 7 0 14" fill="none" stroke="#555" stroke-width="1.400"/></svg>
      <svg class="ml-2 h-[22px] w-[21px]"><path d="M0 1h20v15h-6l-4 5-4-5H0z" fill="#fff"/><path d="M4 5h12M4 8.500h12M4 12h8" stroke="#111" stroke-width="1.300"/></svg>
      <p class="ml-[14px] w-[78px] pb-[2px] text-center font-['Open_Sans',sans-serif] text-[14px] leading-[21px] text-[#e6e6e6]">16:21<br>05/01/2018</p>
    </div>
    <div class="ml-[11px] w-[6px] border-l border-[#444]"></div>
  </div>

</div>
</div>
</div>
</body>
</html>
